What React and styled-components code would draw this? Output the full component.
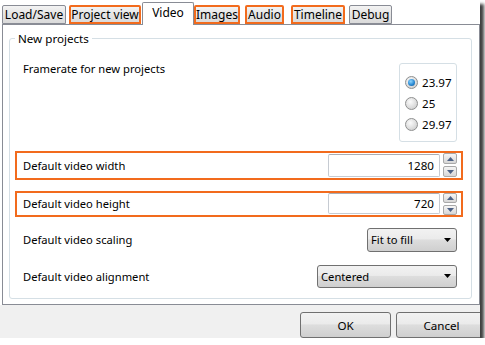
import styled, { createGlobalStyle } from "styled-components";

const GlobalStyle = createGlobalStyle`
  body {
    margin: 0;
    background: #fff;
    font-family: "Noto Sans", "Liberation Sans", sans-serif;
    font-size: 11.2px;
    color: #000;
  }
`;

const ORANGE = "#f26b1d";

const Window = styled.div`
  width: 480px;
  height: 338px;
  display: flex;
  flex-direction: column;
  background: #fff;
  overflow: hidden;
  box-shadow: 4px 4px 3px rgba(0, 0, 0, 0.75);
`;

const TabBar = styled.div`
  display: flex;
  align-items: flex-end;
  height: 24px;
  padding-left: 2px;
  position: relative;
  z-index: 1;
`;

const Tab = styled.div`
  box-sizing: border-box;
  width: ${(p) => p.$w}px;
  margin-left: ${(p) => p.$ml || 0}px;
  height: ${(p) => (p.$active ? 23 : 19)}px;
  margin-bottom: ${(p) => (p.$active ? -1 : 0)}px;
  display: flex;
  align-items: center;
  justify-content: center;
  padding: ${(p) => (p.$active ? "0 0 3px" : "1px 0 0")};
  font-size: 12px;
  border: ${(p) => (p.$mark ? `2px solid ${ORANGE}` : "1px solid #898c95")};
  border-bottom: ${(p) => (p.$active ? "none" : undefined)};
  border-radius: 2px 2px 0 0;
  background: ${(p) =>
    p.$active ? "#fff" : "linear-gradient(#f3f3f3, #e6e6e6 45%, #dadada)"};
  white-space: nowrap;
`;

const Pane = styled.div`
  height: 286px;
  box-sizing: border-box;
  margin-left: 2px;
  border: 1px solid #898c95;
  background: #fff;
  padding: 6px 7px 0 6px;
`;

const Group = styled.fieldset`
  margin: 0;
  padding: 16px 0 10px;
  border: 1px solid #d5dfe5;
  border-radius: 3px;
`;

const Legend = styled.legend`
  margin-left: 5px;
  padding: 0 3px;
  line-height: 16px;
  font-size: 11.6px;
`;

const Row = styled.div`
  box-sizing: border-box;
  height: ${(p) => p.$h}px;
  margin: ${(p) => p.$mt || 0}px 8px 0 5px;
  padding: 0 4px 0 6px;
  border: 2px solid ${(p) => (p.$mark ? ORANGE : "transparent")};
  display: flex;
  align-items: ${(p) => (p.$top ? "flex-start" : "center")};
  justify-content: space-between;
`;

const Label = styled.span`
  line-height: ${(p) => (p.$top ? 10 : 16)}px;
  margin-top: ${(p) => (p.$top ? -1 : 1)}px;
`;

const RadioBox = styled.div`
  box-sizing: border-box;
  width: 58px;
  height: 79px;
  margin-top: -2px;
  border: 1px solid #d5dfe5;
  border-radius: 3px;
  padding: 8px 0 0 5px;
  display: flex;
  flex-direction: column;
`;

const RadioItem = styled.label`
  height: 21px;
  display: flex;
  align-items: center;
  gap: 4px;
  font-size: 11.6px;
`;

const RadioDot = styled.span`
  box-sizing: border-box;
  width: 13px;
  height: 13px;
  border-radius: 50%;
  border: 1px solid #8e8f8f;
  background: radial-gradient(circle at 40% 35%, #fbfbfb, #d6d6d6 70%, #c9c9c9);
  display: flex;
  align-items: center;
  justify-content: center;

  &::after {
    content: "";
    width: 7px;
    height: 7px;
    border-radius: 50%;
    display: ${(p) => (p.$on ? "block" : "none")};
    background: radial-gradient(circle at 40% 35%, #8fd6ff, #2a8ad4 55%, #0d4f8b);
  }
`;

const Spin = styled.div`
  display: flex;
  align-items: center;
  gap: 3px;
`;

const NumberBox = styled.div`
  box-sizing: border-box;
  width: 112px;
  height: ${(p) => p.$h}px;
  border: 1px solid #c6cbd2;
  border-top-color: #abadb3;
  border-radius: 2px;
  background: #fff;
  display: flex;
  align-items: center;
  justify-content: flex-end;
  padding-right: 5px;
  font-size: 11.6px;
`;

const Arrows = styled.div`
  display: flex;
  flex-direction: column;
  gap: 2px;
`;

const ArrowBtn = styled.div`
  box-sizing: border-box;
  width: 14px;
  height: ${(p) => p.$h}px;
  border: 1px solid #a9a9a9;
  border-radius: 2px;
  background: linear-gradient(#f5f5f5, #e6e6e6 50%, #d6d6d6);
  display: flex;
  align-items: center;
  justify-content: center;
`;

const Select = styled.div`
  box-sizing: border-box;
  width: ${(p) => p.$w}px;
  height: ${(p) => p.$h}px;
  border: 1px solid #707070;
  border-radius: 3px;
  background: linear-gradient(#f2f2f2, #ebebeb 45%, #dddddd 50%, #cfcfcf);
  display: flex;
  align-items: center;
  justify-content: space-between;
  padding: 0 5px 0 3px;
`;

const Footer = styled.div`
  flex: 1;
  background: #f0f0f0;
  display: flex;
  justify-content: flex-end;
  align-items: flex-start;
  padding-top: 7px;
  gap: 5px;
  margin-right: -7px;
`;

const Button = styled.div`
  box-sizing: border-box;
  width: 91px;
  height: 26px;
  flex: none;
  border: 1px solid #707070;
  border-radius: 3px;
  background: linear-gradient(#f2f2f2, #ebebeb 45%, #dddddd 50%, #cfcfcf);
  display: flex;
  align-items: center;
  justify-content: center;
  font-size: 11.6px;
`;

const UpArrow = () => (
  <svg width="7" height="4" viewBox="0 0 7 4">
    <path d="M0 4 L3.5 0 L7 4 Z" fill="#4d6185" />
  </svg>
);

const DownArrow = ({ color = "#4d6185" }) => (
  <svg width="7" height="4" viewBox="0 0 7 4">
    <path d="M0 0 L7 0 L3.5 4 Z" fill={color} />
  </svg>
);

const tabs = [
  { name: "Load/Save", w: 64, ml: 0 },
  { name: "Project view", w: 72, ml: 3, mark: true },
  { name: "Video", w: 52, ml: 1, active: true },
  { name: "Images", w: 46, ml: 0, mark: true },
  { name: "Audio", w: 39, ml: 5, mark: true },
  { name: "Timeline", w: 54, ml: 7, mark: true },
  { name: "Debug", w: 43, ml: 4 },
];

const rates = ["23.97", "25", "29.97"];

const SpinField = ({ value, h, up, down }) => (
  <Spin>
    <NumberBox $h={h}>{value}</NumberBox>
    <Arrows>
      <ArrowBtn $h={up}>
        <UpArrow />
      </ArrowBtn>
      <ArrowBtn $h={down}>
        <DownArrow />
      </ArrowBtn>
    </Arrows>
  </Spin>
);

export default function App() {
  return (
    <>
      <GlobalStyle />
      <Window>
        <TabBar>
          {tabs.map((t) => (
            <Tab key={t.name} $w={t.w} $ml={t.ml} $mark={t.mark} $active={t.active}>
              {t.name}
            </Tab>
          ))}
        </TabBar>
        <Pane>
          <Group>
            <Legend>New projects</Legend>
            <Row $h={79} $top>
              <Label $top>Framerate for new projects</Label>
              <RadioBox>
                {rates.map((r, i) => (
                  <RadioItem key={r}>
                    <RadioDot $on={i === 0} />
                    {r}
                  </RadioItem>
                ))}
              </RadioBox>
            </Row>
            <Row $h={29} $mt={9} $mark>
              <Label>Default video width</Label>
              <SpinField value="1280" h={23} up={11} down={11} />
            </Row>
            <Row $h={26} $mt={11} $mark>
              <Label>Default video height</Label>
              <SpinField value="720" h={21} up={10} down={10} />
            </Row>
            <Row $h={24} $mt={11}>
              <Label>Default video scaling</Label>
              <Select $w={90} $h={24}>
                Fit to fill
                <DownArrow color="#000" />
              </Select>
            </Row>
            <Row $h={23} $mt={13}>
              <Label>Default video alignment</Label>
              <Select $w={140} $h={23}>
                Centered
                <DownArrow color="#000" />
              </Select>
            </Row>
          </Group>
        </Pane>
        <Footer>
          <Button>OK</Button>
          <Button>Cancel</Button>
        </Footer>
      </Window>
    </>
  );
}
